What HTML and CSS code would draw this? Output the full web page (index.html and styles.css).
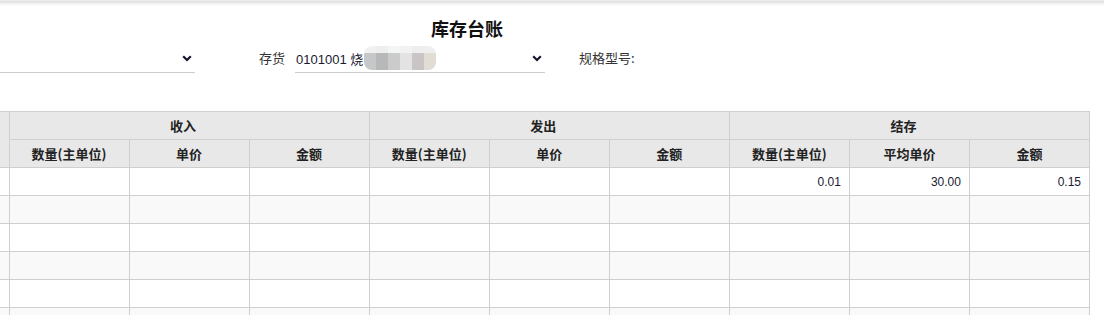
FILE: index.html
```html
<!DOCTYPE html>
<html lang="zh-CN">
<head>
<meta charset="utf-8">
<title>库存台账</title>
<link rel="stylesheet" href="styles.css">
</head>
<body>
<div class="topshadow"></div>
<h1 class="title">库存台账</h1>
<div class="filters">
  <div class="select sel1">
    <span class="value"></span>
    <svg class="chev" width="10" height="7" viewBox="0 0 10 7"><path d="M1.2 1.2 L5 5 L8.8 1.2" fill="none" stroke="#151530" stroke-width="2.2"/></svg>
  </div>
  <div class="label lbl-stock">存货</div>
  <div class="select sel2">
    <span class="value">0101001 烧<span class="mosaic"><i class="m1"></i><i class="m2"></i><i class="m3"></i><i class="m4"></i><i class="m5"></i><i class="m6"></i></span></span>
    <svg class="chev" width="10" height="7" viewBox="0 0 10 7"><path d="M1.2 1.2 L5 5 L8.8 1.2" fill="none" stroke="#151530" stroke-width="2.2"/></svg>
  </div>
  <div class="label lbl-spec">规格型号:</div>
</div>
<table class="ledger">
  <colgroup>
    <col class="c0"><col class="cw"><col class="cw"><col class="cw"><col class="cw"><col class="cw"><col class="cw"><col class="cw"><col class="cw"><col class="cw">
  </colgroup>
  <thead>
    <tr>
      <th class="first" rowspan="2"></th>
      <th class="group" colspan="3">收入</th>
      <th class="group" colspan="3">发出</th>
      <th class="group" colspan="3">结存</th>
    </tr>
    <tr>
      <th>数量(主单位)</th><th>单价</th><th>金额</th>
      <th>数量(主单位)</th><th>单价</th><th>金额</th>
      <th>数量(主单位)</th><th>平均单价</th><th>金额</th>
    </tr>
  </thead>
  <tbody>
    <tr><td class="first"></td><td></td><td></td><td></td><td></td><td></td><td></td><td>0.01</td><td>30.00</td><td>0.15</td></tr>
    <tr><td class="first"></td><td></td><td></td><td></td><td></td><td></td><td></td><td></td><td></td><td></td></tr>
    <tr><td class="first"></td><td></td><td></td><td></td><td></td><td></td><td></td><td></td><td></td><td></td></tr>
    <tr><td class="first"></td><td></td><td></td><td></td><td></td><td></td><td></td><td></td><td></td><td></td></tr>
    <tr><td class="first"></td><td></td><td></td><td></td><td></td><td></td><td></td><td></td><td></td><td></td></tr>
    <tr><td class="first"></td><td></td><td></td><td></td><td></td><td></td><td></td><td></td><td></td><td></td></tr>
  </tbody>
</table>
</body>
</html>
```
FILE: styles.css
```css
html, body {
  margin: 0;
  padding: 0;
  background: #ffffff;
  font-family: "Liberation Sans", "Noto Sans CJK SC", Arial, sans-serif;
  color: #333;
  overflow: hidden;
}
.topshadow {
  height: 6px;
  background: linear-gradient(to bottom, #ffffff 0px, #dcdcdc 1px, #ececec 3px, #ffffff 6px);
}
.title {
  margin: 10px 0 0 0;
  padding-left: 431px;
  font-family: "Noto Sans CJK SC", sans-serif;
  font-size: 18px;
  font-weight: bold;
  line-height: 24px;
  color: #111;
}
.filters {
  display: flex;
  align-items: flex-start;
  margin-top: 4px;
  height: 29px;
  font-size: 13px;
}
.select {
  box-sizing: border-box;
  height: 29px;
  border-bottom: 1px solid #cccccc;
  display: flex;
  align-items: center;
  justify-content: space-between;
  padding-right: 3px;
}
.sel1 { width: 195px; }
.sel2 { width: 250px; padding-left: 1px; }
.value {
  display: flex;
  align-items: center;
  color: #1a1a30;
  font-family: "Liberation Sans", "Noto Sans CJK SC", sans-serif;
  white-space: nowrap;
}
.mosaic {
  display: inline-flex;
  margin-left: 1px;
  height: 24px;
  border-radius: 8px;
  overflow: hidden;
  filter: blur(0.6px);
}
.mosaic i {
  display: block;
  width: 12px;
  height: 24px;
}
.m1 { background: linear-gradient(#f1f1f1 0 30%, #c6c7c9 30%); }
.m2 { background: linear-gradient(#eeeeee 0 30%, #b7b8b8 30%); }
.m3 { background: linear-gradient(#f3f5f7 0 30%, #cbcbcb 30%); }
.m4 { background: linear-gradient(#f2f2f2 0 30%, #e3e3e3 30%); }
.m5 { background: linear-gradient(#eeeeee 0 30%, #c9c5c5 30%); }
.m6 { background: linear-gradient(#efefef 0 30%, #e1dcd4 30%); }
.chev { display: block; }
.label {
  height: 28px;
  line-height: 28px;
  font-family: "Noto Sans CJK SC", sans-serif;
  color: #333;
  white-space: nowrap;
}
.lbl-stock {
  width: 100px;
  box-sizing: border-box;
  text-align: right;
  padding-right: 10px;
}
.lbl-spec {
  margin-left: 34px;
}
.ledger {
  margin-top: 38px;
  border-collapse: collapse;
  table-layout: fixed;
  width: 1090px;
  font-size: 13px;
}
.c0 { width: 9px; }
.cw { width: 120px; }
.ledger th, .ledger td {
  border: 1px solid #cfcfcf;
  height: 28px;
  padding: 0;
  box-sizing: border-box;
}
.ledger th {
  background: #e8e8e8;
  font-family: "Noto Sans CJK SC", sans-serif;
  font-weight: bold;
  color: #222;
  text-align: center;
  line-height: 16px;
}
.ledger th.group {
  padding-right: 12px;
}
.ledger .first {
  border-left: none;
}
.ledger td {
  text-align: right;
  padding-right: 8px;
  font-family: "Liberation Sans", Arial, sans-serif;
  font-size: 12px;
  color: #1a1a30;
  background: #ffffff;
}
.ledger tbody tr:nth-child(even) td {
  background: #f9f9f9;
}
```
